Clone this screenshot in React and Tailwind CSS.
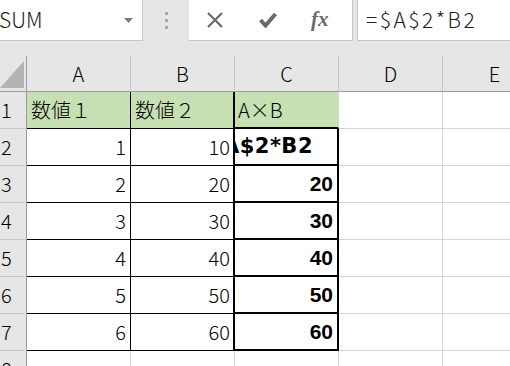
const jp = { fontFamily: '"Noto Sans CJK JP", "Noto Sans", sans-serif' };
const arial = { fontFamily: '"Liberation Sans", Arial, sans-serif' };
const dejavu = { fontFamily: '"DejaVu Sans", sans-serif' };

const cols = ["A", "B", "C", "D", "E"];
const rows = [
  [1, 10, 20],
  [2, 20, 20],
  [3, 30, 30],
  [4, 40, 40],
  [5, 50, 50],
  [6, 60, 60],
];

function Toolbar() {
  return (
    <div className="flex h-[41px] bg-[#e6e6e6]">
      <div className="flex w-[143px] items-center justify-between border-r border-b border-[#c6c6c6] bg-white pr-[9px]">
        <span className="-ml-px text-[21px] font-light text-[#222]" style={jp}>SUM</span>
        <svg width="9" height="5" viewBox="0 0 9 5"><path d="M0 0h9L4.5 5z" fill="#7a7a7a" /></svg>
      </div>
      <div className="flex w-[46px] flex-col items-center justify-center gap-[4px] pl-[1px]">
        <span className="h-[3px] w-[3px] bg-[#a8a8a8]" />
        <span className="h-[3px] w-[3px] bg-[#a8a8a8]" />
        <span className="h-[3px] w-[3px] bg-[#a8a8a8]" />
      </div>
      <div className="flex w-[164px] items-center border-r border-b border-[#c6c6c6] bg-white">
        <svg className="ml-[17px]" width="18" height="16" viewBox="0 0 18 16">
          <path d="M2 1l14 14M16 1L2 15" stroke="#6a6a6a" strokeWidth="2.2" fill="none" />
        </svg>
        <svg className="ml-[35px]" width="18" height="16" viewBox="0 0 18 16">
          <path d="M1.5 8l5 5.5L16.5 2" stroke="#6a6a6a" strokeWidth="4" fill="none" />
        </svg>
        <span className="ml-[34px] text-[21px] font-bold italic text-[#6a6a6a]" style={{ fontFamily: '"Liberation Serif", serif' }}>fx</span>
      </div>
      <div className="ml-[4px] flex flex-1 items-center border-b border-l border-[#c6c6c6] bg-white pl-[8px]">
        <span className="text-[21px] font-light tracking-[2.5px] text-[#222]" style={jp}>=$A$2*B2</span>
      </div>
    </div>
  );
}

export default function App() {
  return (
    <div className="h-[366px] w-[510px] overflow-hidden bg-white">
      <Toolbar />
      <div className="h-[15px] bg-[#e6e6e6]" />
      <div className="grid grid-cols-[27px_104px_104px_104px_104px_104px]">
        {/* header */}
        <div className="flex h-[36px] items-end justify-end border-r border-b border-[#9b9b9b] bg-[#e6e6e6] pr-[2px] pb-[3px]">
          <svg width="24" height="27" viewBox="0 0 24 27"><path d="M24 0V27H0z" fill="#b4b4b4" /></svg>
        </div>
        {cols.map((c) => (
          <div key={c} className="flex h-[36px] items-center justify-center border-r border-b border-r-[#c8c8c8] border-b-[#9b9b9b] bg-[#e6e6e6] text-[20px] font-light text-black" style={jp}>
            {c}
          </div>
        ))}

        {/* row 1 */}
        <RowHead n={1} />
        <div className="flex h-[37px] items-center border-r border-b border-black bg-[#c6e0b4] pl-[4px] text-[20px] font-light" style={jp}>数値１</div>
        <div className="flex h-[37px] items-center border-r-2 border-b border-black bg-[#c6e0b4] pl-[4px] text-[20px] font-light" style={jp}>数値２</div>
        <div className="flex h-[37px] items-center border-r border-b-2 border-r-[#d4d4d4] border-b-black bg-[#c6e0b4] pl-[3px] text-[20px] font-light" style={jp}>A×B</div>
        <Empty />
        <Empty />

        {rows.map(([a, b, c], i) => (
          <Row key={i} n={i + 2} a={a} b={b} c={c} editing={i === 0} />
        ))}

        <RowHead n={8} />
        <Empty />
        <Empty />
        <Empty />
        <Empty />
        <Empty />
      </div>
    </div>
  );
}

function RowHead({ n }) {
  return (
    <div className="flex h-[37px] items-center border-r border-b border-r-[#9b9b9b] border-b-[#c8c8c8] bg-[#e6e6e6] pl-[1px] text-[20px] font-light" style={jp}>
      {n}
    </div>
  );
}

function Empty() {
  return <div className="h-[37px] border-r border-b border-[#d4d4d4]" />;
}

function Row({ n, a, b, c, editing }) {
  return (
    <>
      <RowHead n={n} />
      <div className="flex h-[37px] items-center justify-end border-r border-b border-black pr-[4px] text-[20px] font-light" style={jp}>{a}</div>
      <div className="flex h-[37px] items-center justify-end border-r-2 border-b border-black pr-[3px] text-[20px] font-light" style={jp}>{b}</div>
      {editing ? (
        <div className="flex h-[37px] items-center justify-end overflow-hidden whitespace-nowrap border-r-2 border-b-2 border-black pr-[24px] text-[21px] font-bold tracking-[0.5px]" style={dejavu}>
          =$A$2*B2
        </div>
      ) : (
        <div className="flex h-[37px] items-center justify-end border-r-2 border-b-2 border-black pr-[4px] text-[21px] font-bold" style={arial}>{c}</div>
      )}
      <Empty />
      <Empty />
    </>
  );
}
